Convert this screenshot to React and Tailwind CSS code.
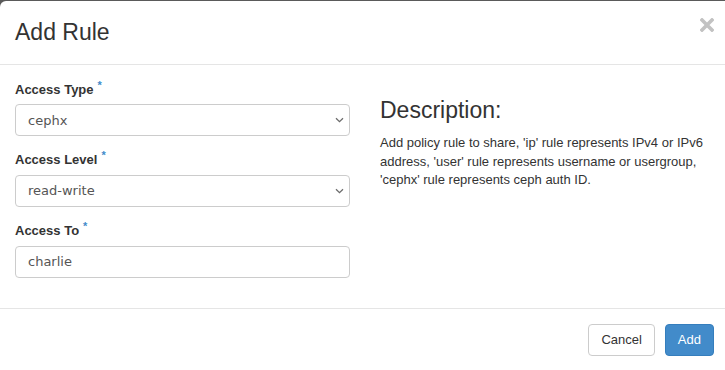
import React from 'react';

const fields = [
  { id: 'access-type', label: 'Access Type', kind: 'select', value: 'cephx', options: ['ip', 'user', 'cephx'] },
  { id: 'access-level', label: 'Access Level', kind: 'select', value: 'read-write', options: ['read-write', 'read-only'] },
  { id: 'access-to', label: 'Access To', kind: 'input', value: 'charlie' },
];

const Chevron = () => (
  <svg
    className="pointer-events-none absolute right-[6px] top-1/2 -translate-y-1/2"
    width="9"
    height="6"
    viewBox="0 0 9 6"
    fill="none"
  >
    <path d="M1 1.2 L4.5 4.6 L8 1.2" stroke="#6b6b6b" strokeWidth="1.3" />
  </svg>
);

const Field = ({ field }) => (
  <div className="mb-[15px]">
    <label htmlFor={field.id} className="mb-[5px] block text-[13px] font-bold leading-[1.428] text-[#333]">
      {field.label}
      <span className="relative -top-[5px] ml-[4px] text-[11px] text-[#428bca]">*</span>
    </label>
    {field.kind === 'select' ? (
      <div className="relative">
        <select
          id={field.id}
          defaultValue={field.value}
          className="block h-8 w-full appearance-none rounded-[4px] border border-[#ccc] bg-white px-3 text-[13px] text-[#555] outline-none"
          style={{ fontFamily: '"DejaVu Sans", sans-serif' }}
        >
          {field.options.map(o => (
            <option key={o} value={o}>{o}</option>
          ))}
        </select>
        <Chevron />
      </div>
    ) : (
      <input
        id={field.id}
        defaultValue={field.value}
        className="block h-8 w-full rounded-[4px] border border-[#ccc] bg-white px-3 text-[13px] text-[#555] outline-none"
        style={{ fontFamily: '"DejaVu Sans", sans-serif' }}
      />
    )}
  </div>
);

const App = () => {
  return (
    <div
      className="h-[370px] w-[725px] overflow-hidden bg-[#5a5a5a] pt-px"
      style={{ fontFamily: '"Liberation Sans", Arial, sans-serif' }}
    >
      <div className="w-[730px] rounded-t-[6px] bg-white">
        {/* Header */}
        <div className="flex items-center justify-between border-b border-[#e5e5e5] p-[15px]">
          <h4 className="text-[23px] font-normal leading-[1.428] text-[#333]">Add Rule</h4>
          <button className="mr-px mt-[-14px] flex h-[14px] w-[14px] items-center justify-center" aria-label="Close">
            <svg width="14" height="14" viewBox="0 0 14 14">
              <path d="M2 2 L12 12 M12 2 L2 12" stroke="#c2c2c2" strokeWidth="3.6" strokeLinecap="square" />
            </svg>
          </button>
        </div>

        {/* Body */}
        <div className="grid grid-cols-2 px-[15px] pt-[16px]">
          <div className="pr-[15px]">
            {fields.map(f => (
              <Field key={f.id} field={f} />
            ))}
          </div>
          <div className="pl-[15px] pr-[6px]">
            <h3 className="mb-[11px] mt-[17px] text-[23px] font-normal leading-[1.1] text-[#333]">Description:</h3>
            <p className="text-[13px] leading-[1.428] text-[#333]">
              Add policy rule to share, 'ip' rule represents IPv4 or IPv6 address, 'user' rule represents username or usergroup, 'cephx' rule represents ceph auth ID.
            </p>
          </div>
        </div>
        <div className="h-[15px]" />

        {/* Footer */}
        <div className="flex justify-end gap-[10px] border-t border-[#e5e5e5] p-[15px] pr-[16px]">
          <button className="h-8 rounded-[4px] border border-[#ccc] bg-white px-3 text-[13px] text-[#333]">Cancel</button>
          <button className="h-8 rounded-[4px] border border-[#357ebd] bg-[#428bca] px-3 text-[13px] text-white">Add</button>
        </div>
      </div>
    </div>
  );
};

export default App;
